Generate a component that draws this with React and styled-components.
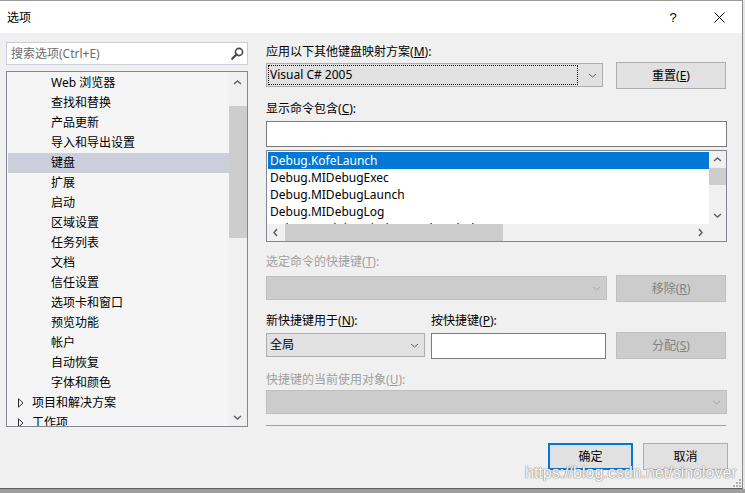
import React from "react";
import styled, { createGlobalStyle } from "styled-components";

const GlobalStyle = createGlobalStyle`
  html, body {
    margin: 0;
    padding: 0;
    background: #e6e6e6;
  }
  body {
    font-family: "Noto Sans", "Noto Sans CJK SC", sans-serif;
    font-size: 12px;
    color: #000;
  }
  * { box-sizing: border-box; }
`;

const Screen = styled.div`
  width: 745px;
  height: 493px;
  display: flex;
  flex-direction: column;
  overflow: hidden;
`;

const Window = styled.div`
  position: relative;
  width: 743px;
  height: 489px;
  display: flex;
  flex-direction: column;
  background: #f0f0f0;
  border-top: 1px solid #9a9a9a;
  border-right: 1px solid #8a8a8a;
  border-bottom: 1px solid #5c5c5c;
`;

const BottomEdge = styled.div`
  flex: 1;
  background: #9e9e9e;
`;

const TitleBar = styled.div`
  height: 32px;
  flex: none;
  background: #fff;
  display: flex;
  align-items: center;
  justify-content: space-between;
  padding-left: 7px;
`;

const TitleText = styled.span`
  font-size: 12px;
  line-height: 16px;
  margin-top: 1px;
`;

const TitleButtons = styled.div`
  display: flex;
  height: 100%;
`;

const TitleButton = styled.div`
  width: 46px;
  height: 100%;
  display: flex;
  align-items: center;
  justify-content: center;
  font-family: "Liberation Sans", sans-serif;
  font-size: 13px;
`;

const Body = styled.div`
  flex: 1;
  display: flex;
  gap: 18px;
  padding: 9px 0 0 6px;
`;

const LeftCol = styled.div`
  width: 242px;
  display: flex;
  flex-direction: column;
  gap: 6px;
`;

const SearchBox = styled.div`
  height: 23px;
  background: #fff;
  border: 1px solid #c9ced6;
  display: flex;
  align-items: center;
  justify-content: space-between;
  padding: 0 3px 0 4px;
  color: #6d6d6d;
  line-height: 16px;
`;

const Tree = styled.div`
  height: 356px;
  border: 1px solid #828790;
  background: #f5f5f5;
  display: flex;
  overflow: hidden;
`;

const TreeRows = styled.div`
  flex: 1;
  padding: 1px 0 0 1px;
  display: flex;
  flex-direction: column;
  overflow: hidden;
`;

const TreeRow = styled.div`
  height: 20px;
  flex: none;
  display: flex;
  align-items: center;
  padding-left: ${(p) => (p.$parent ? 10 : 43)}px;
  background: ${(p) => (p.$selected ? "#cccedb" : "transparent")};
  line-height: 16px;
  white-space: nowrap;
`;

const Expander = styled.span`
  width: 14px;
  display: flex;
  align-items: center;
`;

const VScroll = styled.div`
  width: ${(p) => p.$w}px;
  flex: none;
  background: #f0f0f0;
  display: flex;
  flex-direction: column;
  padding-top: ${(p) => p.$pt || 0}px;
`;

const ArrowBtn = styled.div`
  height: 17px;
  width: 17px;
  flex: none;
  display: flex;
  align-items: center;
  justify-content: center;
`;

const Track = styled.div`
  flex: 1;
  display: flex;
  flex-direction: ${(p) => (p.$horizontal ? "row" : "column")};
`;

const Thumb = styled.div`
  background: #cdcdcd;
  ${(p) =>
    p.$horizontal
      ? `height: 100%; width: ${p.$size}px; margin-left: ${p.$offset}px;`
      : `width: 100%; height: ${p.$size}px; margin-top: ${p.$offset}px;`}
`;

const RightCol = styled.div`
  width: 461px;
  display: flex;
  flex-direction: column;
  padding-top: 2px;
`;

const Label = styled.div`
  height: 16px;
  line-height: 16px;
  font-size: 12px;
  color: ${(p) => (p.$disabled ? "#a0a0a0" : "#000")};
  margin-top: ${(p) => p.$mt || 0}px;
  width: ${(p) => (p.$w ? `${p.$w}px` : "auto")};
  white-space: nowrap;
`;

const Row = styled.div`
  display: flex;
  align-items: flex-start;
  gap: ${(p) => p.$gap || 6}px;
  margin-top: ${(p) => p.$mt || 0}px;
`;

const Combo = styled.div`
  width: ${(p) => p.$w}px;
  height: 24px;
  margin-top: ${(p) => p.$mt || 0}px;
  background: ${(p) => (p.$disabled ? "#cccccc" : "#e1e1e1")};
  border: 1px solid ${(p) => (p.$disabled ? "#bfbfbf" : "#adadad")};
  display: flex;
  align-items: center;
  padding: 1px 5px 1px 1px;
  line-height: 16px;
`;

const ComboValue = styled.div`
  flex: 1;
  height: 100%;
  display: flex;
  align-items: center;
  padding-left: ${(p) => (p.$focus ? 1 : 2)}px;
  margin-right: 10px;
  border: ${(p) => (p.$focus ? "1px dotted #000" : "none")};
`;

const Button = styled.div`
  width: ${(p) => p.$w || 110}px;
  height: 27px;
  flex: none;
  display: flex;
  align-items: center;
  justify-content: center;
  line-height: 16px;
  margin-left: ${(p) => p.$ml || 0}px;
  background: ${(p) => (p.$disabled ? "#cccccc" : "#e1e1e1")};
  border: ${(p) =>
    p.$default ? "2px solid #0078d7" : p.$disabled ? "1px solid #bfbfbf" : "1px solid #adadad"};
  color: ${(p) => (p.$disabled ? "#838383" : "#000")};
`;

const TextBox = styled.div`
  width: ${(p) => p.$w}px;
  height: ${(p) => p.$h || 26}px;
  margin-top: ${(p) => p.$mt || 0}px;
  flex: none;
  background: #fff;
  border: 1px solid #7a7a7a;
`;

const ListBox = styled.div`
  height: 92px;
  margin-top: 3px;
  border: 1px solid #828790;
  background: #fff;
  display: grid;
  grid-template-columns: 1fr 17px;
  grid-template-rows: 1fr 17px;
  overflow: hidden;
`;

const ListItems = styled.div`
  padding: 1px 0 0 1px;
  overflow: hidden;
`;

const ListItem = styled.div`
  height: 17px;
  line-height: 17px;
  padding-left: 2px;
  white-space: nowrap;
  background: ${(p) => (p.$selected ? "#0078d7" : "transparent")};
  color: ${(p) => (p.$selected ? "#fff" : "#000")};
`;

const HScroll = styled.div`
  background: #f0f0f0;
  display: flex;
  height: 17px;
`;

const Corner = styled.div`
  background: #f0f0f0;
`;

const Separator = styled.div`
  height: 1px;
  background: #a0a0a0;
  margin-top: 11px;
  margin-right: 1px;
`;

const Footer = styled.div`
  display: flex;
  justify-content: flex-end;
  gap: 10px;
  margin-top: 17px;
  margin-right: -1px;
`;

const Watermark = styled.div`
  position: absolute;
  left: 525px;
  top: 463px;
  font-family: "Liberation Sans", Arial, sans-serif;
  font-size: 16px;
  line-height: 18px;
  color: rgba(255, 255, 255, 0.95);
  text-shadow: 0 0 1px #8e8e8e, 0 0 1px #8e8e8e, 0 0 2px rgba(0, 0, 0, 0.25);
  pointer-events: none;
  white-space: nowrap;
`;

const Grip = styled.svg`
  position: absolute;
  right: 1px;
  bottom: 1px;
`;

const Chevron = ({ dir = "down", color = "#606060", w = 8, h = 4, sw = 1 }) => {
  const vertical = dir === "up" || dir === "down";
  const W = vertical ? w : h;
  const H = vertical ? h : w;
  const d = {
    down: `M0.5 0.5 L${W / 2} ${H - 0.5} L${W - 0.5} 0.5`,
    up: `M0.5 ${H - 0.5} L${W / 2} 0.5 L${W - 0.5} ${H - 0.5}`,
    left: `M${W - 0.5} 0.5 L0.5 ${H / 2} L${W - 0.5} ${H - 0.5}`,
    right: `M0.5 0.5 L${W - 0.5} ${H / 2} L0.5 ${H - 0.5}`,
  }[dir];
  return (
    <svg width={W + 1} height={H + 1} viewBox={`-0.5 -0.5 ${W + 1} ${H + 1}`} style={{ display: "block" }}>
      <path d={d} fill="none" stroke={color} strokeWidth={sw} />
    </svg>
  );
};

const SearchIcon = () => (
  <svg width="13" height="13" viewBox="0 0 13 13">
    <circle cx="8" cy="5" r="3.6" fill="none" stroke="#4a4a4a" strokeWidth="1.6" />
    <path d="M5.6 7.4 L1.2 11.8" stroke="#4a4a4a" strokeWidth="2.2" strokeLinecap="round" />
  </svg>
);

const Triangle = () => (
  <svg width="6" height="10" viewBox="0 0 6 10">
    <path d="M0.5 0.8 L5 5 L0.5 9.2 Z" fill="none" stroke="#333" strokeWidth="1" />
  </svg>
);

const CloseIcon = () => (
  <svg width="11" height="11" viewBox="0 0 11 11">
    <path d="M0.5 0.5 L10.5 10.5 M10.5 0.5 L0.5 10.5" stroke="#000" strokeWidth="1" />
  </svg>
);

const treeItems = [
  { label: "Web 浏览器" },
  { label: "查找和替换" },
  { label: "产品更新" },
  { label: "导入和导出设置" },
  { label: "键盘", selected: true },
  { label: "扩展" },
  { label: "启动" },
  { label: "区域设置" },
  { label: "任务列表" },
  { label: "文档" },
  { label: "信任设置" },
  { label: "选项卡和窗口" },
  { label: "预览功能" },
  { label: "帐户" },
  { label: "自动恢复" },
  { label: "字体和颜色" },
  { label: "项目和解决方案", parent: true },
  { label: "工作项", parent: true },
];

const commands = [
  "Debug.KofeLaunch",
  "Debug.MIDebugExec",
  "Debug.MIDebugLaunch",
  "Debug.MIDebugLog",
  "Debug.ModulesWindowLoadSymbols",
];

const Key = ({ label, k }) => (
  <>
    {label}(<u>{k}</u>)
  </>
);

export default function App() {
  return (
    <>
      <GlobalStyle />
      <Screen>
        <Window>
          <TitleBar>
            <TitleText>选项</TitleText>
            <TitleButtons>
              <TitleButton>?</TitleButton>
              <TitleButton>
                <CloseIcon />
              </TitleButton>
            </TitleButtons>
          </TitleBar>

          <Body>
            <LeftCol>
              <SearchBox>
                <span>搜索选项(Ctrl+E)</span>
                <SearchIcon />
              </SearchBox>
              <Tree>
                <TreeRows>
                  {treeItems.map((item) => (
                    <TreeRow key={item.label} $selected={item.selected} $parent={item.parent}>
                      {item.parent && (
                        <Expander>
                          <Triangle />
                        </Expander>
                      )}
                      {item.label}
                    </TreeRow>
                  ))}
                </TreeRows>
                <VScroll $w={18} $pt={2}>
                  <ArrowBtn>
                    <Chevron dir="up" w={8} h={4} sw={1.5} />
                  </ArrowBtn>
                  <Track>
                    <Thumb $size={132} $offset={15} />
                  </Track>
                  <ArrowBtn>
                    <Chevron dir="down" w={8} h={4} sw={1.5} />
                  </ArrowBtn>
                </VScroll>
              </Tree>
            </LeftCol>

            <RightCol>
              <Label>
                <Key label="应用以下其他键盘映射方案" k="M" />:
              </Label>
              <Row $gap={13} $mt={2}>
                <Combo $w={337} $mt={1}>
                  <ComboValue $focus>Visual C# 2005</ComboValue>
                  <Chevron />
                </Combo>
                <Button>
                  <Key label="重置" k="E" />
                </Button>
              </Row>

              <Label $mt={12}>
                <Key label="显示命令包含" k="C" />:
              </Label>
              <TextBox $w={461} $mt={4} />
              <ListBox>
                <ListItems>
                  {commands.map((c, i) => (
                    <ListItem key={c} $selected={i === 0}>
                      {c}
                    </ListItem>
                  ))}
                </ListItems>
                <VScroll $w={17}>
                  <ArrowBtn>
                    <Chevron dir="up" w={8} h={4} sw={1.5} />
                  </ArrowBtn>
                  <Track>
                    <Thumb $size={17} $offset={0} />
                  </Track>
                  <ArrowBtn>
                    <Chevron dir="down" w={8} h={4} sw={1.5} />
                  </ArrowBtn>
                </VScroll>
                <HScroll>
                  <ArrowBtn>
                    <Chevron dir="left" w={8} h={4} sw={1.5} />
                  </ArrowBtn>
                  <Track $horizontal>
                    <Thumb $horizontal $size={218} $offset={1} />
                  </Track>
                  <ArrowBtn>
                    <Chevron dir="right" w={8} h={4} sw={1.5} />
                  </ArrowBtn>
                </HScroll>
                <Corner />
              </ListBox>

              <Label $mt={12} $disabled>
                <Key label="选定命令的快捷键" k="T" />:
              </Label>
              <Row $gap={9} $mt={5}>
                <Combo $w={341} $mt={1} $disabled>
                  <ComboValue />
                  <Chevron color="#a8a8a8" />
                </Combo>
                <Button $disabled>
                  <Key label="移除" k="R" />
                </Button>
              </Row>

              <Row $gap={6} $mt={11}>
                <Label $w={159}>
                  <Key label="新快捷键用于" k="N" />:
                </Label>
                <Label>
                  <Key label="按快捷键" k="P" />:
                </Label>
              </Row>
              <Row $gap={6} $mt={3}>
                <Combo $w={159} $mt={1}>
                  <ComboValue>全局</ComboValue>
                  <Chevron />
                </Combo>
                <TextBox $w={175} $mt={1} />
                <Button $disabled $ml={4}>
                  <Key label="分配" k="S" />
                </Button>
              </Row>

              <Label $mt={13} $disabled>
                <Key label="快捷键的当前使用对象" k="U" />:
              </Label>
              <Combo $w={461} $mt={2} $disabled>
                <ComboValue />
                <Chevron color="#a8a8a8" />
              </Combo>

              <Separator />

              <Footer>
                <Button $w={85} $default>
                  确定
                </Button>
                <Button $w={85}>取消</Button>
              </Footer>
            </RightCol>
          </Body>

          <Watermark>https://blog.csdn.net/sinolover</Watermark>
          <Grip width="10" height="10" viewBox="0 0 10 10">
            <rect x="8" y="2" width="2" height="2" fill="#b0b0b0" />
            <rect x="5" y="5" width="2" height="2" fill="#b0b0b0" />
            <rect x="8" y="5" width="2" height="2" fill="#b0b0b0" />
            <rect x="2" y="8" width="2" height="2" fill="#b0b0b0" />
            <rect x="5" y="8" width="2" height="2" fill="#b0b0b0" />
            <rect x="8" y="8" width="2" height="2" fill="#b0b0b0" />
          </Grip>
        </Window>
        <BottomEdge />
      </Screen>
    </>
  );
}
